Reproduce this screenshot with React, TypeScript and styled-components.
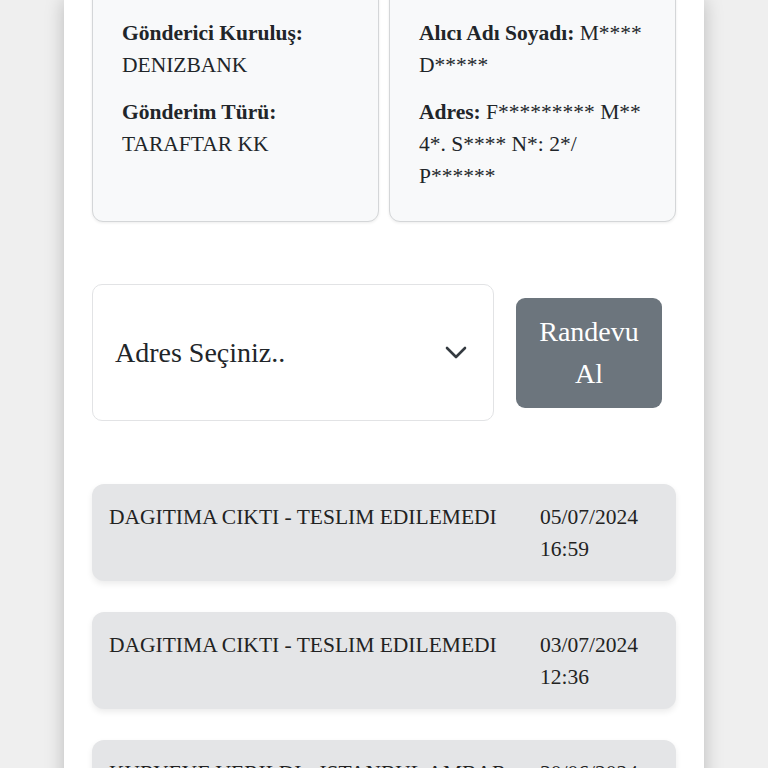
import styled, {createGlobalStyle} from 'styled-components'

const GlobalStyle = createGlobalStyle`
  html, body {
    margin: 0;
    padding: 0;
    background: #efefef;
  }
  * {
    box-sizing: border-box;
  }
`

const history = [
  {status: 'DAGITIMA CIKTI - TESLIM EDILEMEDI', date: '05/07/2024', time: '16:59'},
  {status: 'DAGITIMA CIKTI - TESLIM EDILEMEDI', date: '03/07/2024', time: '12:36'},
  {status: 'KURYEYE VERILDI - ISTANBUL AMBAR MERKEZI', date: '30/06/2024', time: '10:12'},
]

const Chevron = () => (
  <svg width="22" height="14" viewBox="0 0 22 14" fill="none">
    <polyline points="2,2 11,11 20,2" stroke="#343a40" strokeWidth="2.6" strokeLinecap="round" strokeLinejoin="round"/>
  </svg>
)

const App = () => {
  return (
    <>
      <GlobalStyle/>
      <Page>
        <Container>
          <InfoRow>
            <InfoCard>
              <Field><b>Gönderici Kuruluş:</b> DENIZBANK</Field>
              <Field><b>Gönderim Türü:</b> TARAFTAR KK</Field>
            </InfoCard>
            <InfoCard>
              <Field><b>Alıcı Adı Soyadı:</b> M**** D*****</Field>
              <Field><b>Adres:</b> F********* M** 4*. S**** N*: 2*/ P******</Field>
            </InfoCard>
          </InfoRow>

          <ActionRow>
            <Select>
              <span>Adres Seçiniz..</span>
              <Chevron/>
            </Select>
            <Button>Randevu Al</Button>
          </ActionRow>

          <List>
            {history.map((h, i) => (
              <Movement key={i}>
                <Status>{h.status}</Status>
                <When>{h.date} {h.time}</When>
              </Movement>
            ))}
          </List>
        </Container>
      </Page>
    </>
  )
}

export default App

const Page = styled.div`
width: 100%;
min-height: 100vh;
display: flex;
justify-content: center;
overflow: hidden;
font-family: "Liberation Serif", "Times New Roman", serif;
color: #212529;
`

const Container = styled.div`
width: 640px;
min-height: 100vh;
background: #fff;
box-shadow: 0 0 18px rgba(0, 0, 0, 0.22);
padding: 0 28px 40px 28px;
`

const InfoRow = styled.div`
display: grid;
grid-template-columns: 1fr 1fr;
gap: 10px;
margin-top: -12px;
`

const InfoCard = styled.div`
background: #f8f9fa;
border: 1.5px solid #d4d6d8;
border-radius: 11px;
box-shadow: 0 1px 3px rgba(0, 0, 0, 0.08);
padding: 28px 26px 29px 29px;
font-size: 21.5px;
line-height: 32px;
`

const Field = styled.p`
margin: 0 0 15px 0;
&:last-child {
    margin-bottom: 0;
}
b {
    font-weight: 700;
}
`

const ActionRow = styled.div`
display: flex;
align-items: center;
gap: 22px;
margin-top: 62px;
padding-right: 14px;
`

const Select = styled.div`
flex: 1;
height: 137px;
border: 1.5px solid #e2e3e5;
border-radius: 10px;
background: #fff;
display: flex;
align-items: center;
justify-content: space-between;
padding: 0 26px 0 22px;
font-size: 28px;
line-height: 42px;
color: #212529;
`

const Button = styled.button`
width: 146px;
border: none;
border-radius: 9px;
background: #6c757d;
color: #fff;
font-family: "Liberation Serif", "Times New Roman", serif;
font-size: 28px;
line-height: 42px;
padding: 13px 21px;
cursor: pointer;
`

const List = styled.div`
display: flex;
flex-direction: column;
gap: 31px;
margin-top: 63px;
`

const Movement = styled.div`
display: grid;
grid-template-columns: 1fr 119px;
column-gap: 17px;
background: #e4e5e7;
border-radius: 12px;
box-shadow: 0 3px 6px rgba(0, 0, 0, 0.08);
padding: 18px 17px 16px 17px;
font-size: 21.5px;
line-height: 31.5px;
`

const Status = styled.div`
color: #222;
`

const When = styled.div`
color: #222;
`
